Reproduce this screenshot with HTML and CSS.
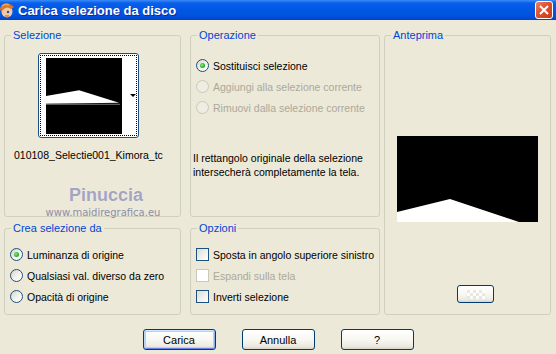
FILE: index.html
```html
<!DOCTYPE html>
<html lang="it">
<head>
    <meta charset="UTF-8">
    <title>Carica selezione da disco</title>
    <link rel="stylesheet" href="styles.css">
</head>
<body>
    <div class="window">
        <div class="titlebar">
            <svg class="app-icon" width="15" height="17" viewBox="0 0 15 17">
                <ellipse cx="7" cy="9.5" rx="5.5" ry="6" fill="#F3C9A0"/>
                <path d="M0 6 Q3 0 10 2 L14 5 L11 7 Q7 4 4 7 L1 10 Z" fill="#D9782C"/>
                <path d="M2 4 Q5 1 9 3" stroke="#F5A64A" stroke-width="1.5" fill="none"/>
                <circle cx="8" cy="10" r="1.2" fill="#2A4AA8"/>
                <path d="M5 14 L9 14" stroke="#C0503C" stroke-width="1"/>
            </svg>
            <span class="title">Carica selezione da disco</span>
            <span class="close">
                <svg width="10" height="10" viewBox="0 0 10 10">
                    <path d="M1 1 L9 9 M9 1 L1 9" stroke="#fff" stroke-width="2"/>
                </svg>
            </span>
        </div>

        <div class="dialog">
            <div class="panes">
                <fieldset class="box sel">
                    <legend>Selezione</legend>
                    <div class="combo">
                        <div class="combo-focus">
                            <svg class="thumb" width="78" height="78" viewBox="0 0 78 78">
                                <rect width="78" height="78" fill="#000"/>
                                <polygon points="0,39 34,33 75,46 0,47" fill="#fff"/>
                                <line x1="0" y1="47.5" x2="76" y2="47.5" stroke="#777" stroke-width="1"/>
                            </svg>
                            <span class="combo-arrow"></span>
                        </div>
                    </div>
                    <div class="filename">010108_Selectie001_Kimora_tc</div>
                </fieldset>

                <fieldset class="box op">
                    <legend>Operazione</legend>
                    <div class="choices op-choices">
                        <div class="opt"><span class="radio on"></span>Sostituisci selezione</div>
                        <div class="opt disabled"><span class="radio"></span>Aggiungi alla selezione corrente</div>
                        <div class="opt disabled"><span class="radio"></span>Rimuovi dalla selezione corrente</div>
                    </div>
                    <p class="note">Il rettangolo originale della selezione<br>intersecherà completamente la tela.</p>
                </fieldset>

                <fieldset class="box prev">
                    <legend>Anteprima</legend>
                    <svg class="preview" width="141" height="86" viewBox="0 0 141 86">
                        <rect width="141" height="86" fill="#000"/>
                        <polygon points="0,76 53,63 122,86 0,86" fill="#fff"/>
                    </svg>
                    <button class="btn small-btn" type="button">
                        <span class="checks"></span>
                    </button>
                </fieldset>

                <fieldset class="box crea">
                    <legend>Crea selezione da</legend>
                    <div class="choices crea-choices">
                        <div class="opt"><span class="radio on"></span>Luminanza di origine</div>
                        <div class="opt"><span class="radio"></span>Qualsiasi val. diverso da zero</div>
                        <div class="opt"><span class="radio"></span>Opacità di origine</div>
                    </div>
                </fieldset>

                <fieldset class="box opz">
                    <legend>Opzioni</legend>
                    <div class="choices opz-choices">
                        <div class="opt"><span class="check"></span>Sposta in angolo superiore sinistro</div>
                        <div class="opt disabled"><span class="check"></span>Espandi sulla tela</div>
                        <div class="opt"><span class="check"></span>Inverti selezione</div>
                    </div>
                </fieldset>
            </div>

            <div class="buttons">
                <button class="btn default" type="button">Carica</button>
                <button class="btn" type="button">Annulla</button>
                <button class="btn" type="button">?</button>
            </div>
        </div>

        <div class="watermark">
            <div class="wm-name">Pinuccia</div>
            <div class="wm-site">www.maidiregrafica.eu</div>
        </div>
    </div>
</body>
</html>
```

FILE: styles.css
```css
body {
    margin: 0;
    background: #ECE9D8;
    font-family: "Liberation Sans", Arial, sans-serif;
    font-size: 10.5px;
    color: #000;
}
.window {
    position: relative;
    width: 556px;
    height: 354px;
    overflow: hidden;
}

/* title bar */
.titlebar {
    height: 20px;
    display: flex;
    align-items: center;
    background: linear-gradient(#3C8CF8 0, #0A5FEA 3px, #0058E6 45%, #0052DD 80%, #0043C4 100%);
    color: #fff;
}
.app-icon {
    margin-right: 3px;
}
.title {
    flex: 1;
    font-weight: bold;
    font-size: 13px;
    text-shadow: 1px 1px 0 #0C2C9A;
}
.close {
    width: 18px;
    height: 18px;
    margin-right: 3px;
    box-sizing: border-box;
    border: 1px solid #fff;
    border-radius: 3px;
    background: #DD4E2C linear-gradient(135deg, #EE8060 0, #E0502D 45%, #C63A1C 100%);
    display: flex;
    align-items: center;
    justify-content: center;
}

/* dialog body */
.dialog {
    padding: 8px 0 0 4px;
}
.panes {
    display: grid;
    grid-template-columns: 177px 190px 167px;
    grid-template-rows: 189px 94px;
    column-gap: 9px;
    row-gap: 4px;
}
.box {
    margin: 0;
    padding: 0;
    min-width: 0;
    border: 1px solid #D0D0BF;
    border-radius: 3px;
}
.box legend {
    margin-left: 6px;
    padding: 0 2px;
    line-height: 14px;
    font-size: 11px;
    color: #0046D5;
}
.prev {
    grid-column: 3;
    grid-row: 1 / span 2;
    width: 167px;
    margin-left: -5px;
    box-sizing: border-box;
}
.crea {
    grid-column: 1;
    grid-row: 2;
}

/* selection combo */
.combo {
    width: 101px;
    height: 85px;
    margin: 11px 0 0 33px;
    box-sizing: border-box;
    border: 1px solid #1C4F86;
    border-radius: 3px;
    background: #fff;
    padding: 1px;
}
.combo-focus {
    height: 100%;
    box-sizing: border-box;
    border: 1px dotted #000;
    display: flex;
    align-items: center;
    padding-left: 5px;
}
.thumb {
    display: block;
}
.combo-arrow {
    margin-left: 8px;
    width: 0;
    height: 0;
    border-left: 3px solid transparent;
    border-right: 3px solid transparent;
    border-top: 3px solid #000;
}
.filename {
    margin: 10px 0 0 9px;
    line-height: 14px;
    white-space: nowrap;
}

/* radio and check lists */
.opt {
    display: flex;
    align-items: center;
    gap: 4px;
    height: 21px;
    white-space: nowrap;
}
.opt.disabled {
    color: #ACA899;
}
.op-choices {
    padding: 13px 0 0 5px;
}
.crea-choices {
    padding: 9px 0 0 5px;
}
.opz-choices {
    padding: 9px 0 0 5px;
}
.radio {
    width: 13px;
    height: 13px;
    box-sizing: border-box;
    border: 1px solid #1C5180;
    border-radius: 50%;
    background: linear-gradient(135deg, #D6D3C8 0, #F4F3EE 55%, #fff 100%);
    display: flex;
    align-items: center;
    justify-content: center;
}
.radio.on::after {
    content: "";
    width: 5px;
    height: 5px;
    border-radius: 50%;
    background: radial-gradient(circle at 40% 40%, #8CF08C 0, #2CB42C 55%, #1A8F1A 100%);
}
.disabled .radio {
    border-color: #CAC8BB;
    background: #EFEDE3;
}
.check {
    width: 13px;
    height: 13px;
    box-sizing: border-box;
    border: 1px solid #1C5180;
    background: linear-gradient(135deg, #DCDCD5 0, #F2F2EE 60%, #fff 100%);
}
.disabled .check {
    border-color: #CAC8BB;
    background: #fff;
}
.note {
    margin: 33px 0 0 2px;
    line-height: 14px;
    white-space: nowrap;
}

/* buttons */
.buttons {
    display: flex;
    justify-content: center;
    gap: 26px;
    margin-top: 14px;
    padding-right: 4px;
}
.btn {
    width: 73px;
    height: 21px;
    box-sizing: border-box;
    border: 1px solid #003C74;
    border-radius: 3px;
    background: linear-gradient(#FFFFFF 0, #F8F7F2 50%, #ECEAE2 85%, #D8D3C6 100%);
    font-family: "Liberation Sans", Arial, sans-serif;
    font-size: 11px;
    color: #000;
    padding: 0;
}
.btn.default {
    box-shadow: inset 0 1px 0 #CEE7FF, inset 1px 0 0 #BCD4F6, inset -1px 0 0 #89ADE4, inset 0 -1px 0 #6982EE, inset 0 0 0 2px #B8D0F4;
}

/* preview */
.preview {
    display: block;
    margin: 94px 0 0 12px;
}
.btn.small-btn {
    display: block;
    width: 37px;
    height: 18px;
    margin: 63px 0 0 72px;
}
.checks {
    display: block;
    margin: 0 auto;
    width: 18px;
    height: 9px;
    background: repeating-conic-gradient(#FFFFFF 0 25%, #E6E4DC 0 50%) 0 0 / 6px 6px;
    opacity: 0.8;
}

/* watermark over the selection box */
.watermark {
    position: absolute;
    left: 42px;
    top: 185px;
    text-align: center;
    width: 122px;
}
.wm-name {
    font-family: "Liberation Sans", Arial, sans-serif;
    font-weight: bold;
    font-size: 18px;
    line-height: 20px;
    color: #A4A4C0;
    text-shadow: 0 0 1px #fff;
    padding-left: 6px;
}
.wm-site {
    font-family: "DejaVu Sans", sans-serif;
    font-size: 10px;
    line-height: 12px;
    color: #8E8EA8;
    margin-top: 2px;
}
```
